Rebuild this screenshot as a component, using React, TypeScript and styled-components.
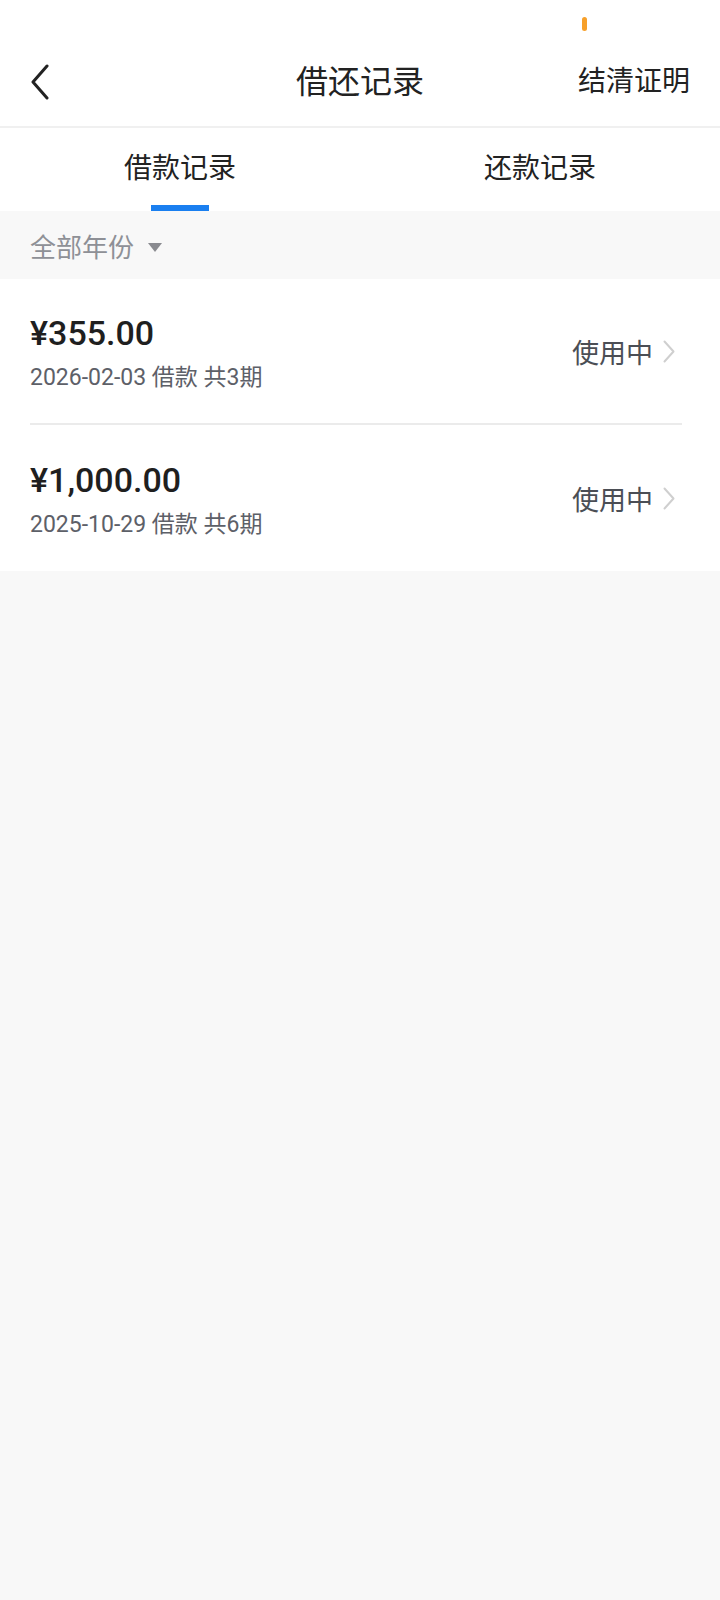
import React, { useState } from "react";
import styled, { createGlobalStyle } from "styled-components";

const GlobalStyle = createGlobalStyle`
  html, body {
    margin: 0;
    padding: 0;
    background: #f8f8f8;
  }
  body {
    font-family: Roboto, "Noto Sans CJK SC", "Noto Sans", sans-serif;
    color: #222;
  }
  * { box-sizing: border-box; }
`;

const Page = styled.div`
  width: 720px;
  min-height: 1600px;
  background: #f8f8f8;
  display: flex;
  flex-direction: column;
`;

const StatusBar = styled.div`
  height: 42px;
  background: #fff;
  display: flex;
  justify-content: flex-end;
  padding: 17px 133px 0 0;
`;

const Indicator = styled.span`
  width: 5px;
  height: 14px;
  border-radius: 3px;
  background: #f7a02a;
`;

const Header = styled.header`
  height: 86px;
  background: #fff;
  border-bottom: 2px solid #f0f0f0;
  display: grid;
  grid-template-columns: 1fr auto 1fr;
  align-items: center;
  padding: 0 30px 4px 30px;
`;

const BackButton = styled.button`
  justify-self: start;
  border: none;
  background: none;
  padding: 0;
  width: 24px;
  height: 36px;
  display: flex;
  align-items: center;
  cursor: pointer;
`;

const Title = styled.h1`
  margin: 0;
  font-size: 32px;
  font-weight: 400;
  color: #222;
  line-height: 40px;
`;

const HeaderAction = styled.span`
  justify-self: end;
  font-size: 28px;
  color: #222;
  line-height: 40px;
`;

const Tabs = styled.nav`
  height: 83px;
  background: #fff;
  display: grid;
  grid-template-columns: 1fr 1fr;
`;

const Tab = styled.button<{ $active: boolean }>`
  position: relative;
  border: none;
  background: none;
  font-family: inherit;
  font-size: 28px;
  color: #222;
  padding: 0 0 8px 0;
  cursor: pointer;
  &::after {
    content: "";
    display: ${(p) => (p.$active ? "block" : "none")};
    position: absolute;
    left: 50%;
    bottom: 0;
    width: 58px;
    height: 6px;
    margin-left: -29px;
    background: #1a7ff0;
  }
`;

const FilterBar = styled.div`
  height: 68px;
  background: #f8f8f8;
  display: flex;
  align-items: center;
  gap: 14px;
  padding: 0 30px;
  font-size: 26px;
  color: #8e9096;
`;

const Triangle = styled.span`
  width: 0;
  height: 0;
  border-left: 7px solid transparent;
  border-right: 7px solid transparent;
  border-top: 9px solid #8a8b90;
  margin-top: 4px;
`;

const List = styled.ul`
  list-style: none;
  margin: 0;
  padding: 0 38px 0 30px;
  background: #fff;
`;

const Item = styled.li<{ $last?: boolean }>`
  height: 146px;
  display: flex;
  align-items: center;
  justify-content: space-between;
  border-bottom: ${(p) => (p.$last ? "none" : "2px solid #ebebeb")};
`;

const Info = styled.div`
  display: flex;
  flex-direction: column;
  gap: 8px;
  margin-top: 6px;
`;

const Amount = styled.div`
  font-size: 34px;
  font-weight: 500;
  color: #1f1f1f;
  line-height: 40px;
`;

const Meta = styled.div`
  font-size: 23px;
  color: #5d6068;
  line-height: 34px;
`;

const Status = styled.div`
  display: flex;
  align-items: center;
  gap: 10px;
  font-size: 27px;
  color: #4b4e55;
  margin-right: 7px;
`;

const loans = [
  { amount: "¥355.00", meta: "2026-02-03 借款 共3期", status: "使用中" },
  { amount: "¥1,000.00", meta: "2025-10-29 借款 共6期", status: "使用中" },
];

export default function App() {
  const [tab, setTab] = useState(0);
  return (
    <Page>
      <GlobalStyle />
      <StatusBar>
        <Indicator />
      </StatusBar>
      <Header>
        <BackButton aria-label="返回">
          <svg width="20" height="36" viewBox="0 0 20 36" fill="none">
            <path d="M17 2 L3 18 L17 34" stroke="#222" strokeWidth="3" strokeLinecap="round" strokeLinejoin="round" />
          </svg>
        </BackButton>
        <Title>借还记录</Title>
        <HeaderAction>结清证明</HeaderAction>
      </Header>
      <Tabs>
        <Tab $active={tab === 0} onClick={() => setTab(0)}>借款记录</Tab>
        <Tab $active={tab === 1} onClick={() => setTab(1)}>还款记录</Tab>
      </Tabs>
      <FilterBar>
        全部年份
        <Triangle />
      </FilterBar>
      <List>
        {loans.map((l, i) => (
          <Item key={i} $last={i === loans.length - 1}>
            <Info>
              <Amount>{l.amount}</Amount>
              <Meta>{l.meta}</Meta>
            </Info>
            <Status>
              {l.status}
              <svg width="12" height="23" viewBox="0 0 12 23" fill="none">
                <path d="M1.5 1.5 L10.5 11.5 L1.5 21.5" stroke="#cfcfcf" strokeWidth="2" strokeLinecap="round" strokeLinejoin="round" />
              </svg>
            </Status>
          </Item>
        ))}
      </List>
    </Page>
  );
}
